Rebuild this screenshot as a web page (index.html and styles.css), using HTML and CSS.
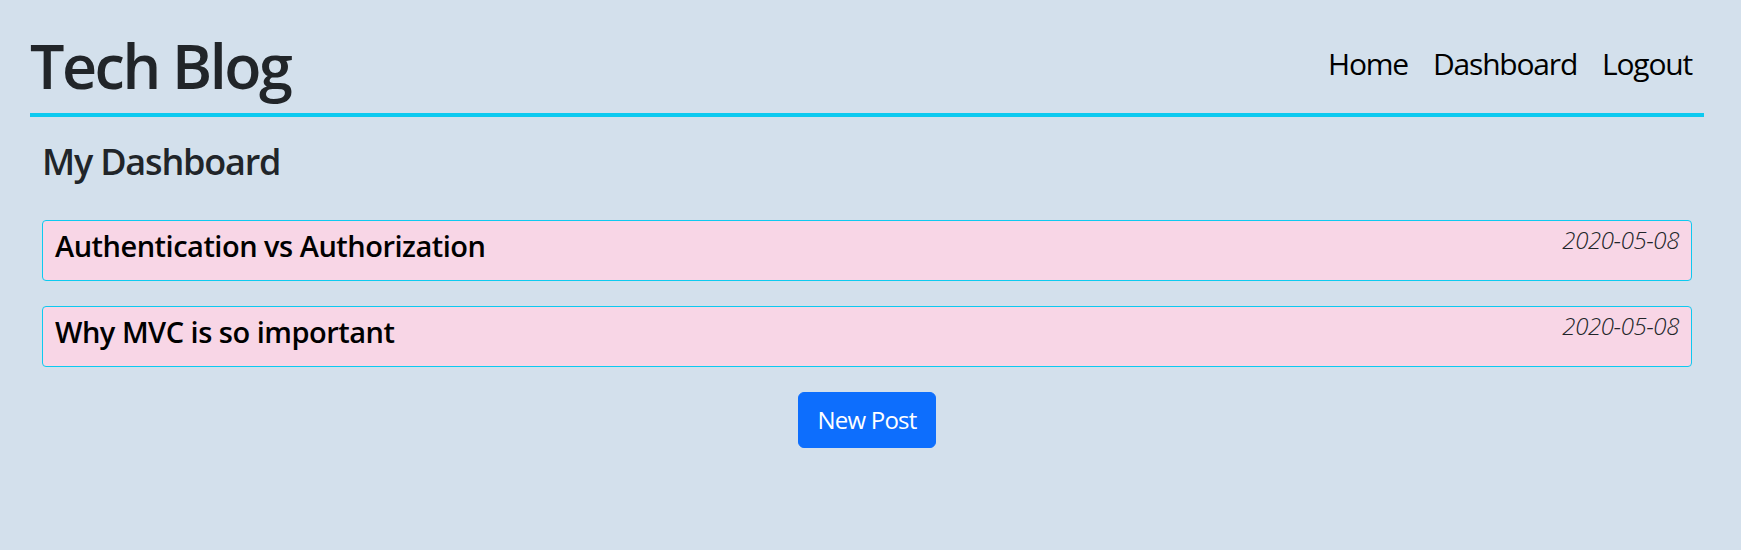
FILE: index.html
```html
<!DOCTYPE html>
<html lang="en">
<head>
<meta charset="utf-8">
<title>Tech Blog</title>
<link rel="stylesheet" href="styles.css">
</head>
<body>
<header class="site-header">
  <h1 class="brand">Tech Blog</h1>
  <nav class="nav">
    <a class="nav-link" href="#">Home</a>
    <a class="nav-link" href="#">Dashboard</a>
    <a class="nav-link" href="#">Logout</a>
  </nav>
</header>
<main class="main">
  <h2 class="page-title">My Dashboard</h2>
  <div class="post-list">
    <article class="post-card">
      <h3 class="post-title">Authentication vs Authorization</h3>
      <span class="post-date">2020-05-08</span>
    </article>
    <article class="post-card">
      <h3 class="post-title">Why MVC is so important</h3>
      <span class="post-date">2020-05-08</span>
    </article>
  </div>
  <div class="actions">
    <button class="btn-primary" type="button">New Post</button>
  </div>
</main>
</body>
</html>
```

FILE: styles.css
```css
html, body {
  margin: 0;
  padding: 0;
}

body {
  background: #d3e0ec;
  font-family: "Open Sans", "Noto Sans", sans-serif;
  color: #212529;
  min-height: 550px;
}

.site-header {
  display: flex;
  justify-content: space-between;
  align-items: flex-start;
  margin: 0 37px 0 30px;
  padding-top: 28px;
  padding-bottom: 9px;
  border-bottom: 4px solid #0dcaf0;
}

.brand {
  margin: 0;
  font-size: 61px;
  line-height: 76px;
  font-weight: 600;
  letter-spacing: -2.5px;
  color: #212529;
}

.nav {
  display: flex;
  padding-top: 16px;
}

.nav-link {
  font-size: 30px;
  line-height: 40px;
  letter-spacing: -1.2px;
  color: #000;
  text-decoration: none;
  padding: 0 12px 0 13px;
}

.main {
  margin: 0 49px 0 42px;
}

.page-title {
  margin: 23px 0 36px;
  font-size: 36px;
  line-height: 44px;
  font-weight: 600;
  letter-spacing: -1.2px;
  color: #212529;
}

.post-list {
  display: flex;
  flex-direction: column;
  gap: 25px;
}

.post-card {
  display: flex;
  justify-content: space-between;
  align-items: flex-start;
  box-sizing: border-box;
  height: 61px;
  padding: 3px 12px 0 12px;
  background: #f8d6e6;
  border: 1px solid #0dcaf0;
  border-radius: 4px;
}

.post-title {
  margin: 4px 0 0;
  font-size: 29px;
  line-height: 36px;
  font-weight: 600;
  letter-spacing: -0.5px;
  color: #000;
}

.post-date {
  margin-top: 1px;
  font-size: 24px;
  line-height: 30px;
  font-style: italic;
  font-weight: 300;
  letter-spacing: -0.4px;
  color: #212529;
}

.actions {
  display: flex;
  justify-content: center;
  margin-top: 25px;
}

.btn-primary {
  box-sizing: border-box;
  font-family: inherit;
  font-size: 24px;
  line-height: 32px;
  letter-spacing: -0.8px;
  white-space: nowrap;
  color: #fff;
  background: #0d6efd;
  border: 1px solid #0d6efd;
  border-radius: 6px;
  padding: 0;
  width: 138px;
  height: 56px;
  cursor: pointer;
}
```
